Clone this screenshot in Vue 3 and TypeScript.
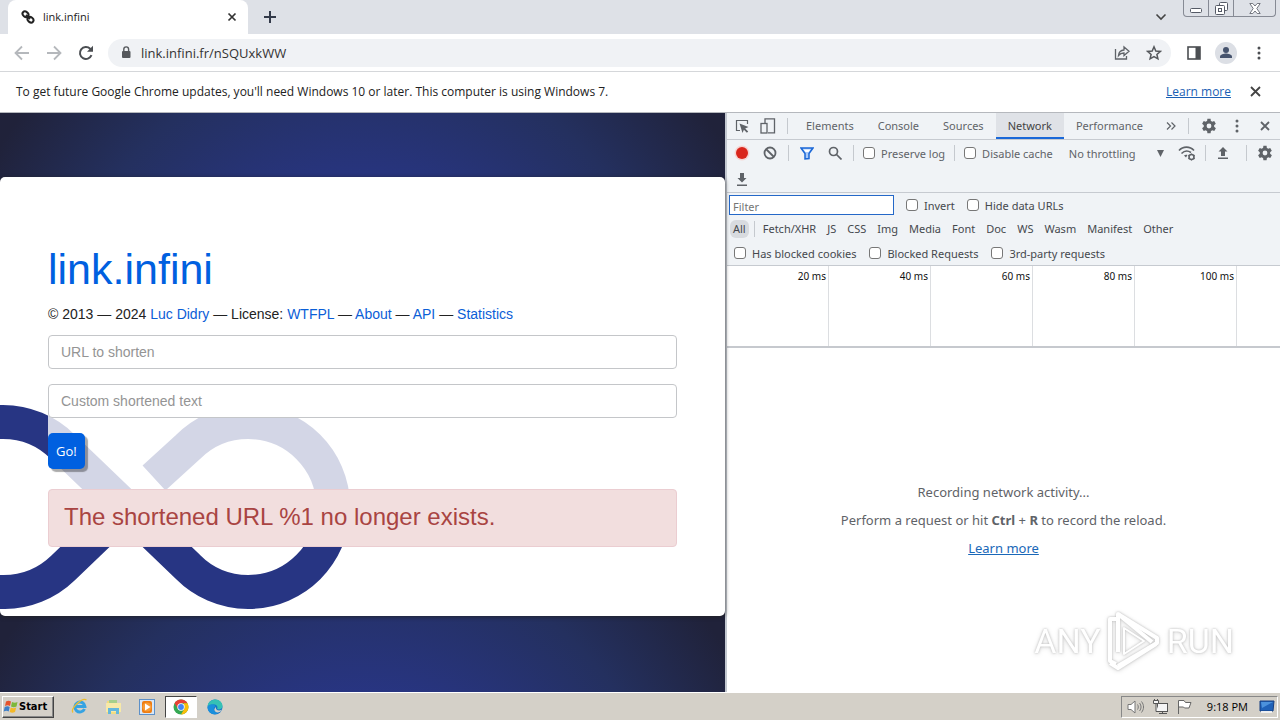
<script setup lang="ts">
import { ref } from 'vue'

const address = ref('link.infini.fr/nSQUxkWW')
const longUrl = ref('')
const customText = ref('')
const filter = ref('')
const activePanel = ref('Network')
const activeType = ref('All')

const panels: string[] = ['Elements', 'Console', 'Sources', 'Network', 'Performance']
const types: string[] = ['Fetch/XHR', 'JS', 'CSS', 'Img', 'Media', 'Font', 'Doc', 'WS', 'Wasm', 'Manifest', 'Other']
const ticks: string[] = ['20 ms', '40 ms', '60 ms', '80 ms', '100 ms']
const gear =
  'M19.4 13a7.6 7.6 0 0 0 0-2l2.1-1.7-2-3.5-2.5 1a7.5 7.5 0 0 0-1.7-1L15 3h-4l-.4 2.8a7.5 7.5 0 0 0-1.7 1l-2.500-1-2 3.500L6.500 11a7.600 7.600 0 0 0 0 2l-2.100 1.700 2 3.500 2.500-1a7.500 7.500 0 0 0 1.700 1L11 21h4l.4-2.800a7.500 7.500 0 0 0 1.700-1l2.500 1 2-3.500zM13 15a3 3 0 1 1 0-6 3 3 0 0 1 0 6z'
</script>

<template>
  <div class="screen">
    <header class="tabstrip">
      <div class="tab">
        <svg class="favicon" viewBox="0 0 14 14" width="14" height="14" fill="none" stroke="#222" stroke-width="2">
          <ellipse cx="4.500" cy="4.300" rx="3.200" ry="2.500" transform="rotate(40 4.500 4.300)" />
          <ellipse cx="9.500" cy="9.700" rx="3.200" ry="2.500" transform="rotate(40 9.500 9.700)" />
          <path d="M5 5l4 4" />
        </svg>
        <span class="tab-title">link.infini</span>
        <button class="icon-btn" aria-label="Close tab">
          <svg viewBox="0 0 10 10" width="10" height="10" stroke="#333" stroke-width="1.700"><path d="M1.500 1.500l7 7M8.500 1.500l-7 7" /></svg>
        </button>
      </div>
      <button class="icon-btn new-tab" aria-label="New tab">
        <svg viewBox="0 0 12 12" width="12" height="12" stroke="#333a4a" stroke-width="2"><path d="M6 0v12M0 6h12" /></svg>
      </button>
      <span class="grow"></span>
      <button class="icon-btn tab-search" aria-label="Search tabs">
        <svg viewBox="0 0 12 8" width="12" height="8" fill="none" stroke="#444" stroke-width="1.600"><path d="M1.500 1.500L6 6l4.500-4.500" /></svg>
      </button>
      <div class="win-controls">
        <button class="win-btn" aria-label="Minimize">
          <svg viewBox="0 0 12 12" width="12" height="12"><rect x=".5" y="6.500" width="11" height="4" rx="1" fill="#fff" stroke="#555a66" /></svg>
        </button>
        <button class="win-btn" aria-label="Restore">
          <svg viewBox="0 0 13 13" width="13" height="13" fill="#fff" stroke="#555a66"><rect x="4.500" y=".5" width="8" height="8" rx="1" /><rect x=".5" y="3.500" width="9" height="9" rx="1" /><rect x="3.500" y="6.500" width="3" height="3" /></svg>
        </button>
        <button class="win-btn wide" aria-label="Close window">
          <svg viewBox="0 0 12 11" width="12" height="11"><path d="M.8.5h3L6 3 8.200.5h3L7.800 5.500l3.400 5h-3L6 8l-2.200 2.500h-3l3.400-5z" fill="#fff" stroke="#666a74" stroke-width=".9" /></svg>
        </button>
      </div>
    </header>

    <nav class="toolbar">
      <button class="icon-btn" aria-label="Back">
        <svg viewBox="0 0 16 16" width="16" height="16" fill="none" stroke="#b5b8bc" stroke-width="1.800"><path d="M15 8H2M8 1.500L1.500 8 8 14.500" /></svg>
      </button>
      <button class="icon-btn" aria-label="Forward">
        <svg viewBox="0 0 16 16" width="16" height="16" fill="none" stroke="#b5b8bc" stroke-width="1.800"><path d="M1 8h13M8 1.500L14.500 8 8 14.500" /></svg>
      </button>
      <button class="icon-btn" aria-label="Reload">
        <svg viewBox="0 0 16 16" width="16" height="16"><path d="M13.500 10.200A6 6 0 1 1 12.200 3.700L13.600 5" fill="none" stroke="#4b4e52" stroke-width="2" /><path d="M15 .8v6H9z" fill="#4b4e52" /></svg>
      </button>
      <div class="omnibox">
        <svg viewBox="0 0 10 13" width="10" height="13"><rect x="1" y="5" width="8.500" height="7" rx="1" fill="#55585c" /><path d="M2.800 5V3.300a2.400 2.400 0 0 1 4.800 0V5" fill="none" stroke="#55585c" stroke-width="1.400" /></svg>
        <div class="address">
          <input v-model="address" class="address-input" aria-label="Address" />
        </div>
        <button class="icon-btn" aria-label="Share">
          <svg viewBox="0 0 16 15" width="16" height="15" fill="none" stroke="#5f6368" stroke-width="1.300"><path d="M1.500 4v10h11v-3" /><path d="M4.500 10.500c.4-3.500 2.300-5.300 5.500-5.500V2l5 4.300-5 4.200V8c-2.500 0-4 .6-5.500 2.500z" /></svg>
        </button>
        <button class="icon-btn" aria-label="Bookmark">
          <svg viewBox="0 0 16 16" width="16" height="16" fill="none" stroke="#55585c" stroke-width="1.500"><path d="M8 1.800l1.800 4.200 4.500.4-3.400 3 1 4.400L8 11.500l-3.900 2.300 1-4.400-3.400-3L6.200 6z" /></svg>
        </button>
      </div>
      <button class="icon-btn" aria-label="Side panel">
        <svg viewBox="0 0 14 14" width="14" height="14"><rect x="1" y="1" width="12" height="12" fill="#fff" stroke="#4b4e52" stroke-width="1.600" /><path d="M8.500 1H13v12H8.500z" fill="#4b4e52" /></svg>
      </button>
      <button class="icon-btn profile" aria-label="Profile">
        <svg viewBox="0 0 22 22" width="22" height="22" fill="#46536d"><circle cx="11" cy="11" r="11" fill="#dcdfe5" /><circle cx="11" cy="8" r="3" /><path d="M5 16v-1.500c0-2 4-3 6-3s6 1 6 3V16z" /></svg>
      </button>
      <button class="icon-btn" aria-label="Menu">
        <svg viewBox="0 0 4 14" width="4" height="14" fill="#4b4e52"><circle cx="2" cy="2" r="1.500" /><circle cx="2" cy="7" r="1.500" /><circle cx="2" cy="12" r="1.500" /></svg>
      </button>
    </nav>

    <aside class="infobar">
      <span class="grow">To get future Google Chrome updates, you'll need Windows 10 or later. This computer is using Windows 7.</span>
      <a class="learn" href="#">Learn more</a>
      <button class="icon-btn" aria-label="Dismiss">
        <svg viewBox="0 0 11 11" width="11" height="11" stroke="#444" stroke-width="1.800"><path d="M1 1l9 9M10 1l-9 9" /></svg>
      </button>
    </aside>

    <div class="workspace">
      <main class="page">
        <section class="card">
          <svg class="ribbon" viewBox="0 0 352 204" width="352" height="204" fill="none" stroke="#273583" stroke-width="34">
            <path d="M-2 17H3A85 85 0 0 1 63 42L188 162A85 85 0 1 0 188 42L154 73" />
            <path d="M-2 187H3A85 85 0 0 0 63 163L110 118" />
          </svg>
          <div class="content">
            <h1><a href="#">link.infini</a></h1>
            <p class="meta">© 2013 — 2024 <a href="#">Luc Didry</a> — License: <a href="#">WTFPL</a> — <a href="#">About</a> — <a href="#">API</a> — <a href="#">Statistics</a></p>
            <form class="form" @submit.prevent>
              <input v-model="longUrl" class="field" aria-label="URL to shorten" placeholder="URL to shorten" />
              <input v-model="customText" class="field" aria-label="Custom shortened text" placeholder="Custom shortened text" />
              <button class="go">Go!</button>
            </form>
            <div class="alert" role="alert">The shortened URL %1 no longer exists.</div>
          </div>
        </section>
      </main>

      <section class="devtools">
        <div class="panel-tabs">
          <button class="icon-btn" aria-label="Inspect">
            <svg viewBox="0 0 14 14" width="14" height="14"><path d="M5 11.500H1.500v-10h11V5" fill="none" stroke="#5f6368" stroke-width="1.200" /><path d="M4.500 4.500l9 3.500-3.300 1.400 3 3-1.300 1.300-3-3L7.500 14z" fill="#5f6368" /></svg>
          </button>
          <button class="icon-btn" aria-label="Device mode">
            <svg viewBox="0 0 16 16" width="16" height="16" fill="none" stroke="#5f6368" stroke-width="1.300"><path d="M5 5V.8h9.500v14H8" /><rect x="1" y="5.500" width="6" height="9.500" /></svg>
          </button>
          <i class="sep"></i>
          <div class="panels">
            <button v-for="p in panels" :key="p" class="panel" :class="{ active: p === activePanel }" @click="activePanel = p">{{ p }}</button>
          </div>
          <button class="icon-btn" aria-label="More panels">
            <svg viewBox="0 0 10 10" width="10" height="10" fill="none" stroke="#5f6368" stroke-width="1.200"><path d="M1 1.500L4.500 5 1 8.500M5.500 1.500L9 5 5.500 8.500" /></svg>
          </button>
          <div class="panel-end">
            <i class="sep"></i>
            <button class="icon-btn tool-end" aria-label="Settings"><svg viewBox="3 2 20 20" width="16" height="16" fill="#5f6368"><path :d="gear" /></svg></button>
            <button class="icon-btn tool-end" aria-label="Customize"><svg viewBox="0 0 4 14" width="4" height="14" fill="#5f6368"><circle cx="2" cy="2" r="1.500" /><circle cx="2" cy="7" r="1.500" /><circle cx="2" cy="12" r="1.500" /></svg></button>
            <button class="icon-btn tool-end" aria-label="Close tools"><svg viewBox="0 0 10 10" width="10" height="10" stroke="#5f6368" stroke-width="1.800"><path d="M1 1l8 8M9 1L1 9" /></svg></button>
          </div>
        </div>

        <div class="net-bar">
          <div class="net-row">
            <button class="icon-btn tool" aria-label="Record"><svg viewBox="0 0 16 16" width="16" height="16"><circle cx="8" cy="8" r="7.500" fill="#f6d5d3" /><circle cx="8" cy="8" r="6" fill="#d9261c" /></svg></button>
            <button class="icon-btn tool" aria-label="Clear"><svg viewBox="0 0 14 14" width="14" height="14" fill="none" stroke="#5f6368" stroke-width="1.800"><circle cx="7" cy="7" r="5.500" /><path d="M3 3l8 8" /></svg></button>
            <i class="sep"></i>
            <button class="icon-btn tool" aria-label="Filter"><svg viewBox="0 0 14 13" width="14" height="13"><path d="M1 1h12L9 6.500v5L5 12V6.500z" fill="#a9c9f8" stroke="#1a67d6" stroke-width="1.500" /><path d="M3.500 2.500h7L8.500 5h-3z" fill="#fff" /></svg></button>
            <button class="icon-btn tool" aria-label="Search"><svg viewBox="0 0 14 14" width="14" height="14" fill="none" stroke="#5f6368" stroke-width="1.700"><circle cx="5.500" cy="5.500" r="4" /><path d="M8.500 8.500l5 5" /></svg></button>
            <i class="sep"></i>
            <label class="check"><input type="checkbox" />Preserve log</label>
            <i class="sep"></i>
            <label class="check"><input type="checkbox" />Disable cache</label>
            <div class="throttle">
              <select aria-label="Throttling"><option>No throttling</option></select>
              <svg viewBox="0 0 7 7" width="7" height="7" fill="#5f6368"><path d="M0 0h7L3.500 7z" /></svg>
            </div>
            <button class="icon-btn conditions" aria-label="Network conditions"><svg viewBox="0 0 18 15" width="18" height="15" fill="none" stroke="#5f6368" stroke-width="1.600"><path d="M1 4.500c4-4.500 11-4.500 15 0M3.500 7.500c3-3 6.500-3 9.500-1" /><path d="M6 9.500c1-1 2.500-1 3.500-.5L8 11.500z" fill="#5f6368" stroke="none" /><circle cx="13.500" cy="11" r="2.500" /><path d="M13.500 7.500v1.500M13.500 13v1.500M10.300 9.200l1.400.8M15.300 12l1.400.8M10.300 12.800l1.400-.8M15.300 10l1.400-.8" stroke-width="1.200" /></svg></button>
            <i class="sep"></i>
            <button class="icon-btn upload" aria-label="Import"><svg viewBox="0 0 12 12" width="12" height="12" fill="#5f6368"><path d="M6 0l4.500 4.500H8V9H4V4.500H1.500zM1 10.500h10V12H1z" /></svg></button>
            <i class="sep"></i>
            <button class="icon-btn tool-end settings" aria-label="Network settings"><svg viewBox="3 2 20 20" width="16" height="16" fill="#5f6368"><path :d="gear" /></svg></button>
          </div>
          <div class="net-row">
            <button class="icon-btn tool" aria-label="Export"><svg viewBox="0 0 12 13" width="12" height="13" fill="#5f6368"><path d="M6 9.500L1.500 5H4V0h4v5h2.500zM1 11.500h10V13H1z" /></svg></button>
          </div>
        </div>

        <div class="filters">
          <div class="filter-row">
            <input v-model="filter" class="filter-input" aria-label="Filter" placeholder="Filter" />
            <label class="check dark"><input type="checkbox" />Invert</label>
            <label class="check dark"><input type="checkbox" />Hide data URLs</label>
          </div>
          <div class="type-row">
            <button class="type" :class="{ active: activeType === 'All' }" @click="activeType = 'All'">All</button>
            <i class="sep"></i>
            <button v-for="t in types" :key="t" class="type" :class="{ active: activeType === t }" @click="activeType = t">{{ t }}</button>
          </div>
          <div class="cookie-row">
            <label class="check dark"><input type="checkbox" />Has blocked cookies</label>
            <label class="check dark"><input type="checkbox" />Blocked Requests</label>
            <label class="check dark"><input type="checkbox" />3rd-party requests</label>
          </div>
        </div>

        <div class="timeline">
          <span v-for="t in ticks" :key="t" class="tick">{{ t }}</span>
        </div>

        <div class="empty">
          <p>Recording network activity...</p>
          <p>Perform a request or hit <b>Ctrl</b> + <b>R</b> to record the reload.</p>
          <p><a href="#">Learn more</a></p>
          <div class="watermark">
            <span>ANY</span>
            <svg viewBox="0 0 58 64" width="58" height="64" fill="none" stroke="#fff" stroke-width="4" stroke-linejoin="round">
              <path d="M13 43V5l39 24v5L13 57" />
              <path d="M11 10H5v42l6 3M13 5l34 28M5 54l8 5 38-24" />
              <path d="M19 19v26l20-13z" stroke-width="2" />
            </svg>
            <span>RUN</span>
          </div>
        </div>
      </section>
    </div>

    <footer class="taskbar">
      <button class="start">
        <svg viewBox="0 0 16 15" width="16" height="15"><path d="M3 2.500c2-1.300 3.500-1 5 0L7 7C5.500 6 4 6 2 7z" fill="#e5532d" /><path d="M9 3c2 1 3.500 1 5.500 0L13.500 7.500c-2 1-3.500 1-5.500 0z" fill="#7db83a" /><path d="M1.700 8c2-1 3.500-1 5 0l-1 4.500c-1.500-1-3-1-5 0z" fill="#3e7fc8" /><path d="M7.700 8.500c2 1 3.500 1 5.500 0L12 13c-2 1-3.500 1-5.300 0z" fill="#f4b928" /></svg>
        Start
      </button>
      <div class="apps">
        <button class="app" aria-label="Internet Explorer"><svg viewBox="0 0 17 17" width="17" height="17" fill="none"><path d="M13.500 11a5 5 0 1 1 .4-2.500H5" stroke="#36a3e2" stroke-width="3" /><path d="M2 14.500C-1 11 11-1 15.500 2" stroke="#edbd2e" stroke-width="1.300" /></svg></button>
        <button class="app" aria-label="Explorer"><svg viewBox="0 0 17 16" width="17" height="16"><path d="M2 2h5l1 2h7v11H2z" fill="#f3dc80" /><path d="M4 1h8v5H4z" fill="#a6cf8b" /><path d="M1 4h15v9H1z" fill="#f7e9a8" /><path d="M3 15V9h11v6h-3v-3H6v3z" fill="#65b7dc" /></svg></button>
        <button class="app" aria-label="Media Player"><svg viewBox="0 0 16 16" width="16" height="16"><rect x=".5" y=".5" width="15" height="15" fill="#d8e7f7" stroke="#5d90c8" /><rect x="3" y="2" width="10" height="12" rx="2" fill="#ee7d13" /><circle cx="8" cy="8" r="4.500" fill="#f79b36" /><path d="M6 4.500v7L11.500 8z" fill="#fff" /></svg></button>
        <button class="app pressed" aria-label="Chrome"><svg viewBox="0 0 16 16" width="16" height="16"><circle cx="8" cy="8" r="7.500" fill="#35a853" /><path d="M1.500 4.300A7.500 7.500 0 0 1 14.500 4.300H8L4.800 9.500z" fill="#e84135" /><path d="M14.500 4.300A7.500 7.500 0 0 1 8 15.500l3.500-6L10.500 4.300z" fill="#fbbd08" /><circle cx="8" cy="8" r="3.700" fill="#fff" /><circle cx="8" cy="8" r="2.900" fill="#4285f4" /></svg></button>
        <button class="app" aria-label="Edge"><svg viewBox="0 0 16 16" width="16" height="16"><circle cx="8" cy="8" r="7.500" fill="#1473c8" /><path d="M.5 7.500C1 2.500 5 .5 8.500.5c4 0 7 3 7 6.500 0 3-3 4-5.500 3 1-1.500.5-4-2.500-4.500-3-.3-6 .5-7 2z" fill="#35c1b5" /><path d="M.5 8C3 4 8 5 8.500 7.500c-3 1.500-2 6 3 6.500-5 3-11 0-11-6z" fill="#1a8fdc" /><path d="M9 8c-1 3 3 4.500 6 2.500-1 2-3 3.500-5 3-3-.8-3.500-4-1-5.500z" fill="#d4d0c8" /></svg></button>
      </div>
      <span class="grow"></span>
      <div class="tray">
        <svg viewBox="0 0 18 14" width="18" height="14" fill="#fff" stroke="#777" stroke-width="1"><path d="M1 4.500h3L8 1v12L4 9.500H1z" /><path d="M10.500 4.500c1 1.500 1 3.500 0 5M12.500 3c2 2.500 2 5.500 0 8M14.500 1.500c2.700 3.500 2.700 7.500 0 11" fill="none" /></svg>
        <svg viewBox="0 0 17 16" width="17" height="16" fill="#f5f5f5" stroke="#555" stroke-width="1"><rect x="5.500" y="4.500" width="10" height="8" /><path d="M7 14.500h8M10.500 12.500v2M1.500 1.500v3h5v-3zM4 4.500v8h3M2.500 0v2M5.500 0v2" /></svg>
        <svg viewBox="0 0 16 15" width="16" height="15" fill="#fff" stroke="#666" stroke-width="1"><path d="M2.500 15V1.500H8l1.500 2H15L13 9H8.500L7.500 8h-5" /></svg>
        <time>9:18 PM</time>
        <svg viewBox="0 0 16 14" width="16" height="14"><path d="M1 1h14l-1 10H1z" fill="#2062b8" stroke="#163f80" /><path d="M2 2h12L3 8z" fill="#4c92dc" /><path d="M2 12h11" stroke="#eee" stroke-width="2" /></svg>
      </div>
    </footer>
  </div>
</template>

<style>
body { margin: 0; }
</style>

<style scoped>
* { box-sizing: border-box; }
.screen { display: flex; flex-direction: column; min-height: 100vh; background: #fff; color: #222; font-family: 'Open Sans', 'Noto Sans', sans-serif; font-size: 12px; overflow: hidden; }
button, input, select { font: inherit; color: inherit; margin: 0; padding: 0; }
button { border: 0; background: none; }
svg { display: block; flex: none; }
.grow { flex: 1; }
.icon-btn { display: flex; align-items: center; justify-content: center; flex: none; }

.tabstrip { display: flex; align-items: center; height: 34px; padding-left: 8px; background: #dee1e7; }
.tab { display: flex; align-items: center; gap: 8px; width: 240px; height: 34px; padding: 0 11px 0 13px; border-radius: 8px 8px 0 0; background: #fff; }
.tab-title { flex: 1; padding-bottom: 2px; font-size: 11px; }
.new-tab { margin-left: 16px; }
.tab-search { margin-right: 16px; }
.win-controls { display: flex; align-self: flex-start; height: 17px; margin-right: 4px; border: 1px solid #868a94; border-top: 0; border-radius: 0 0 4px 4px; }
.win-btn { display: flex; align-items: center; justify-content: center; width: 25px; border-right: 1px solid #868a94; }
.win-btn.wide { width: 41px; border: 0; }

.toolbar { display: flex; align-items: center; gap: 16px; height: 38px; padding: 0 19px 0 14px; border-bottom: 1px solid #d5d7da; }
.omnibox { display: flex; flex: 1; align-items: center; gap: 16px; height: 28px; margin-left: -2px; padding: 0 9px 0 13px; border-radius: 14px; background: #f0f2f5; }
.address { flex: 1; margin-left: -6px; }
.address-input { display: block; width: 100%; height: 22px; border: 0; background: transparent; outline: 0; font-size: 13px; color: #333; }
.profile { margin: 0 4px 0 -2px; }

.infobar { display: flex; align-items: center; height: 41px; padding: 0 19px 2px 16px; border-bottom: 1px solid #b5b8bd; }
.learn { margin-right: 19px; color: #1a5fb4; }

.workspace { display: grid; grid-template-columns: minmax(0, 1fr) 555px; flex: 1; }
.page { padding: 64px 0 76px; background: radial-gradient(circle, #283583 38%, #24305f 70%, #20223a 96%) 0 0 / 100% 503px; font-family: 'Liberation Sans', Arial, sans-serif; }
.card { position: relative; min-height: 439px; padding: 64px 48px; border-radius: 5px; background: #fff; box-shadow: 0 1px 4px #222c; }
.ribbon { position: absolute; left: 0; bottom: 7px; }
.content { position: relative; }
h1 { margin: 0 0 7px; font-size: 43px; font-weight: 400; line-height: 56px; }
.content a { color: #0b5ed7; text-decoration: none; }
.content h1 a { color: #0060e0; }
.meta { margin: 0 0 11px; font-size: 14px; line-height: 20px; color: #222; }
.form { display: flex; flex-direction: column; align-items: flex-start; gap: 15px; padding-bottom: 20px; background: #fffc; }
.field { width: 100%; height: 34px; padding: 0 12px; border: 1px solid #c4c6c9; border-radius: 4px; background: #fff; font-size: 14px; outline: 0; }
.field::placeholder { color: #949494; opacity: 1; }
.go { height: 36px; padding: 0 8px; border-radius: 5px; background: #0060e0; color: #fff; box-shadow: 3px 3px 1px #0005; font-family: 'Open Sans', sans-serif; font-size: 13px; }
.alert { padding: 13px 15px 15px; border: 1px solid #ebcdd1; border-radius: 4px; background: #f2dede; color: #a94442; font-size: 24px; line-height: 28px; }

.devtools { display: flex; flex-direction: column; min-width: 0; border-left: 2px solid #c3c8d0; font-family: 'Noto Sans', 'Open Sans', sans-serif; font-size: 11px; color: #5f6368; }
.panel-tabs { display: flex; align-items: center; height: 27px; padding-left: 8px; gap: 11px; background: #f0f3f6; border-bottom: 1px solid #c6cad0; }
.panels { display: flex; align-self: stretch; margin-left: -5px; }
.panel { padding: 0 12px; border-bottom: 2px solid transparent; }
.panel.active { background: #dfe2e7; border-color: #1a68d8; color: #444; }
.panel-end { display: flex; align-items: center; gap: 11px; margin-left: auto; padding-right: 7px; }
.sep { flex: none; width: 1px; height: 16px; background: #c5c9ce; }
.tool-end { width: 17px; }
.net-bar { background: #f0f3f6; border-bottom: 1px solid #c6cad0; }
.net-row { display: flex; align-items: center; gap: 10px; height: 26px; padding: 0 7px 0 6px; }
.net-row .sep { margin: 0 -1px; }
.tool { width: 18px; }
.check { display: flex; align-items: center; gap: 6px; white-space: nowrap; }
.check input { appearance: none; width: 12px; height: 12px; border: 1px solid #777; border-radius: 3px; background: #fff; }
.dark { color: #45484d; }
.throttle { display: grid; align-items: center; width: 108px; margin-left: 6px; }
.throttle select { grid-area: 1 / 1; appearance: none; border: 0; background: transparent; outline: 0; }
.throttle svg { grid-area: 1 / 1; justify-self: end; margin-right: 12px; pointer-events: none; }
.throttle { width: 110px; }
.throttle svg { margin-right: 2px; }
.conditions { margin-left: 2px; }
.upload { width: 16px; margin-right: 6px; }
.settings { margin-left: auto; }
.filters { background: #f0f3f6; border-bottom: 1px solid #c6cad0; }
.filter-row, .type-row, .cookie-row { display: flex; align-items: center; height: 24px; }
.filter-row { gap: 12px; padding-left: 2px; }
.filter-input { width: 165px; height: 20px; padding: 2px 3px 0; border: 1px solid #2468c8; background: #fff; outline: 0; }
.filter-input::placeholder { color: #757575; opacity: 1; }
.type-row { gap: 5px; padding-left: 3px; }
.type { padding: 0 3px; border-radius: 6px; line-height: 18px; color: #45484d; }
.type.active { background: #d8dbdf; }
.cookie-row { gap: 13px; padding-left: 7px; }
.timeline { display: flex; height: 82px; border-bottom: 2px solid #c6c9ce; color: #111; font-size: 10px; }
.tick { width: 102px; padding: 3px 2px 0 0; border-right: 1px solid #dcdee1; text-align: right; }
.empty { position: relative; display: flex; flex: 1; flex-direction: column; align-items: center; justify-content: center; font-size: 13px; }
.empty p { margin: 0; line-height: 28px; }
.empty a { color: #1a68b8; }
.watermark { position: absolute; right: 46px; bottom: 19px; display: flex; align-items: center; gap: 4px; color: #fff; font: 34px Roboto, sans-serif; filter: drop-shadow(0 0 1px #bbb) drop-shadow(0 1px 2px #e4e4e4); }

.taskbar { display: flex; align-items: center; height: 28px; padding: 2px; border-top: 1px solid #fff; background: #d4d0c8; }
.start { display: flex; align-items: center; height: 22px; width: 52px; border: 1px solid; border-color: #fff #444 #444 #fff; box-shadow: inset -1px -1px #888; color: #000; font: bold 11px 'DejaVu Sans Condensed', sans-serif; }
.apps { display: flex; margin-left: 9px; gap: 2px; }
.app { display: flex; align-items: center; justify-content: center; width: 32px; height: 22px; }
.pressed { border: 1px solid; border-color: #444 #fff #fff #444; background: #fff; }
.tray { display: flex; align-items: center; gap: 7px; height: 22px; padding: 0 2px 0 5px; border: 1px solid; border-color: #888 #fff #fff #888; color: #000; }
.tray time { margin: 0 4px 0 8px; font-size: 11px; }
</style>
